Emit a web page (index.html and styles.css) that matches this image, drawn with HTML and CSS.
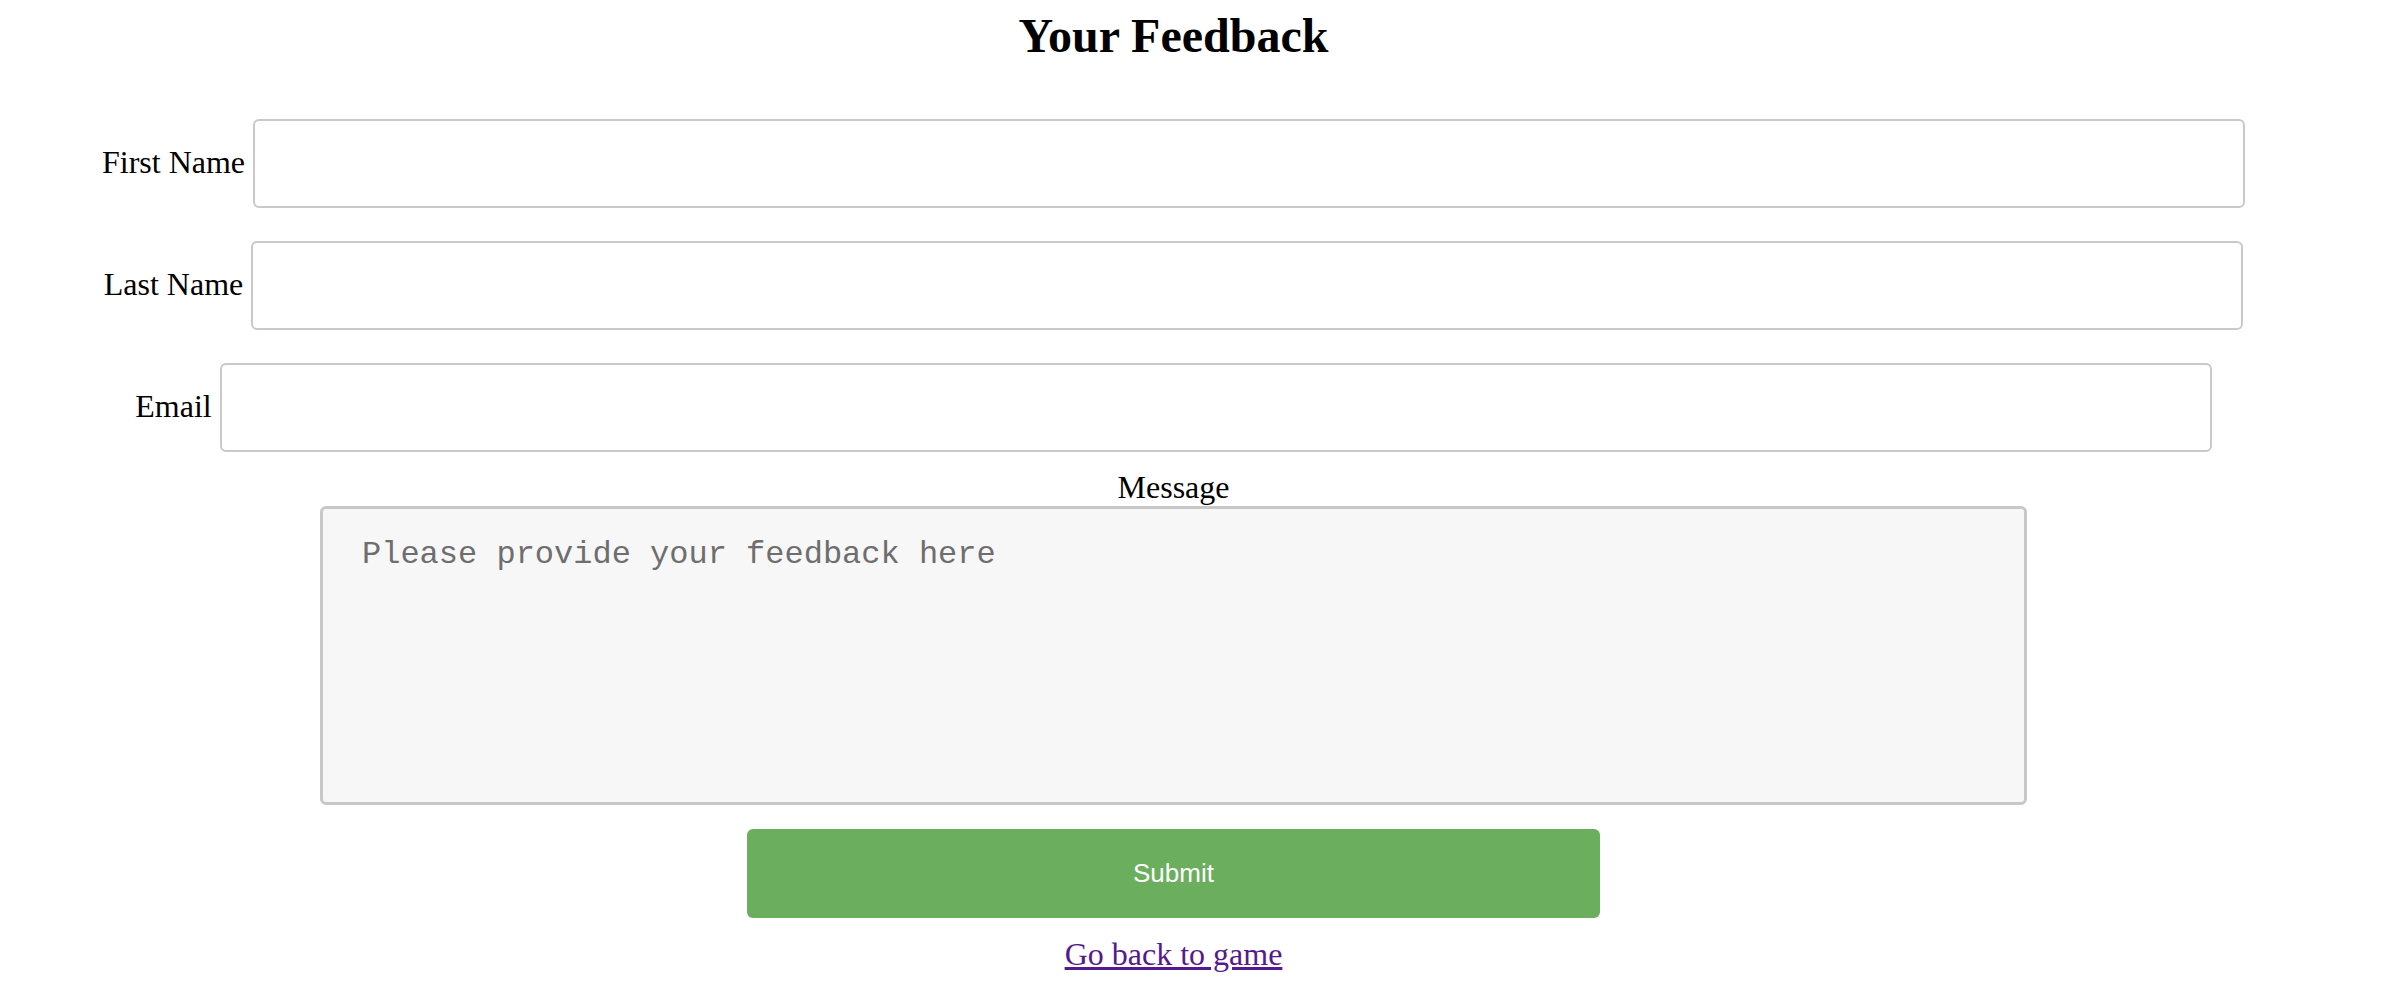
FILE: index.html
```html
<!DOCTYPE html>
<html lang="en">
<head>
<meta charset="utf-8">
<title>Your Feedback</title>
<link rel="stylesheet" href="styles.css">
</head>
<body>
<main class="page">
  <h1 class="title">Your Feedback</h1>
  <form class="form">
    <div class="fields">
      <div class="field">
        <label class="field-label" for="first">First Name</label>
        <input class="field-input" id="first" type="text">
      </div>
      <div class="field">
        <label class="field-label" for="last">Last Name</label>
        <input class="field-input" id="last" type="text">
      </div>
      <div class="field">
        <label class="field-label" for="email">Email</label>
        <input class="field-input" id="email" type="email">
      </div>
    </div>
    <div class="message">
      <label class="message-label" for="msg">Message</label>
      <textarea class="message-input" id="msg" placeholder="Please provide your feedback here"></textarea>
    </div>
    <button class="submit" type="button">Submit</button>
    <a class="back-link" href="#">Go back to game</a>
  </form>
</main>
</body>
</html>
```
FILE: styles.css
```css
html, body {
  margin: 0;
  padding: 0;
  background: #ffffff;
}

body {
  font-family: "Liberation Serif", "Times New Roman", serif;
  color: #000000;
}

.page {
  padding: 8px 43px 0 0;
  text-align: center;
}

.title {
  margin: 0;
  font-size: 48px;
  font-weight: bold;
  line-height: normal;
}

.form {
  display: flex;
  flex-direction: column;
  align-items: center;
  margin-top: 56px;
}

.fields {
  display: flex;
  flex-direction: column;
  align-items: center;
  gap: 33px;
}

.field {
  display: flex;
  align-items: center;
  gap: 8px;
}

.field-label {
  font-size: 32px;
  line-height: normal;
  margin-bottom: 3px;
}

.field-input {
  box-sizing: border-box;
  width: 1992px;
  height: 89px;
  border: 2px solid #c9c9c9;
  border-radius: 6px;
  background: #ffffff;
  padding: 0 16px;
  font-size: 28px;
  font-family: "Liberation Sans", Arial, sans-serif;
  outline: none;
}

.message {
  display: flex;
  flex-direction: column;
  align-items: center;
  margin-top: 17px;
}

.message-label {
  font-size: 32px;
  line-height: normal;
}

.message-input {
  display: block;
  box-sizing: border-box;
  width: 1707px;
  height: 299px;
  margin: 0;
  border: 3px solid #c8c8c8;
  border-radius: 6px;
  background: #f7f7f7;
  padding: 27px 39px;
  font-family: "Liberation Mono", "Courier New", monospace;
  font-size: 32px;
  line-height: normal;
  resize: none;
  outline: none;
}

.message-input::placeholder {
  color: #6e6e6e;
  opacity: 1;
}

.submit {
  margin-top: 24px;
  width: 853px;
  height: 89px;
  border: none;
  border-radius: 6px;
  background: #6aae5e;
  color: #ffffff;
  font-family: "Liberation Sans", Arial, sans-serif;
  font-size: 26px;
  cursor: pointer;
}

.back-link {
  display: block;
  margin-top: 18px;
  font-size: 32px;
  line-height: normal;
  color: #551a8b;
  text-decoration: underline;
}
```
